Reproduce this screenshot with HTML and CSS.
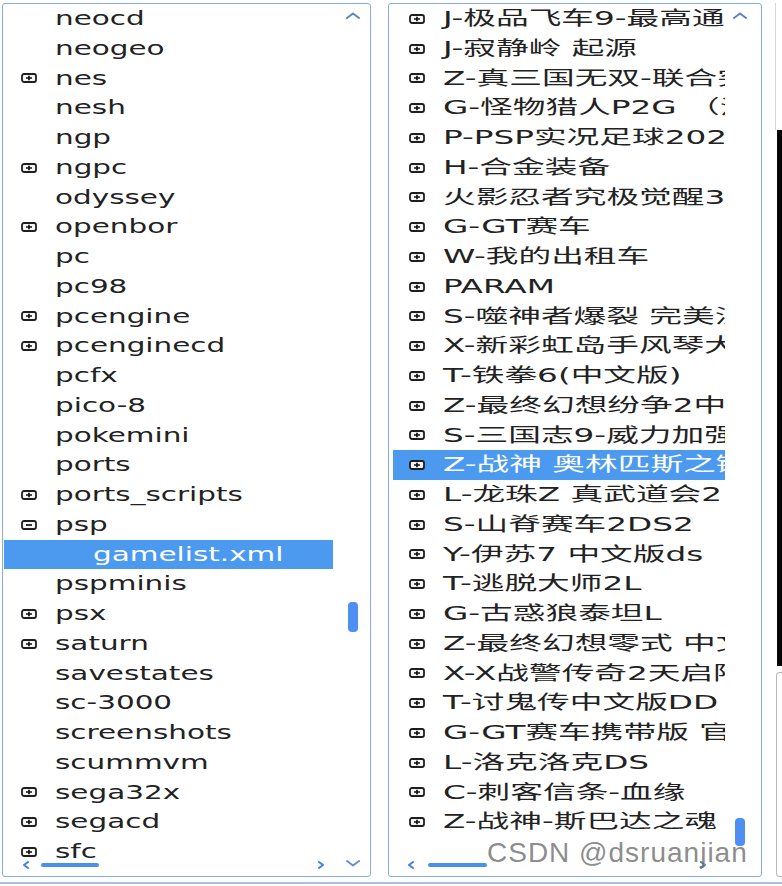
FILE: index.html
```html
<!DOCTYPE html>
<html lang="zh-CN">
<head>
<meta charset="utf-8">
<title>Tree</title>
<link rel="stylesheet" href="styles.css">
</head>
<body>
<div class="screen">
  <div class="panes">
    <section class="pane pane-left">
      <div class="tree tree-left">
        <div class="row"><span class="tog"></span><span class="lbl">neocd</span></div>
        <div class="row"><span class="tog"></span><span class="lbl">neogeo</span></div>
        <div class="row"><svg class="tog" viewBox="0 0 16 10"><rect x="1" y="1" width="14" height="8" rx="2"/><path d="M5 5H11M8 2.8V7.2"/></svg><span class="lbl">nes</span></div>
        <div class="row"><span class="tog"></span><span class="lbl">nesh</span></div>
        <div class="row"><span class="tog"></span><span class="lbl">ngp</span></div>
        <div class="row"><svg class="tog" viewBox="0 0 16 10"><rect x="1" y="1" width="14" height="8" rx="2"/><path d="M5 5H11M8 2.8V7.2"/></svg><span class="lbl">ngpc</span></div>
        <div class="row"><span class="tog"></span><span class="lbl">odyssey</span></div>
        <div class="row"><svg class="tog" viewBox="0 0 16 10"><rect x="1" y="1" width="14" height="8" rx="2"/><path d="M5 5H11M8 2.8V7.2"/></svg><span class="lbl">openbor</span></div>
        <div class="row"><span class="tog"></span><span class="lbl">pc</span></div>
        <div class="row"><span class="tog"></span><span class="lbl">pc98</span></div>
        <div class="row"><svg class="tog" viewBox="0 0 16 10"><rect x="1" y="1" width="14" height="8" rx="2"/><path d="M5 5H11M8 2.8V7.2"/></svg><span class="lbl">pcengine</span></div>
        <div class="row"><svg class="tog" viewBox="0 0 16 10"><rect x="1" y="1" width="14" height="8" rx="2"/><path d="M5 5H11M8 2.8V7.2"/></svg><span class="lbl">pcenginecd</span></div>
        <div class="row"><span class="tog"></span><span class="lbl">pcfx</span></div>
        <div class="row"><span class="tog"></span><span class="lbl">pico-8</span></div>
        <div class="row"><span class="tog"></span><span class="lbl">pokemini</span></div>
        <div class="row"><span class="tog"></span><span class="lbl">ports</span></div>
        <div class="row"><svg class="tog" viewBox="0 0 16 10"><rect x="1" y="1" width="14" height="8" rx="2"/><path d="M5 5H11M8 2.8V7.2"/></svg><span class="lbl">ports_scripts</span></div>
        <div class="row"><svg class="tog" viewBox="0 0 16 10"><rect x="1" y="1" width="14" height="8" rx="2"/><path d="M5 5H11"/></svg><span class="lbl">psp</span></div>
        <div class="row sel nested"><span class="tog"></span><span class="lbl">gamelist.xml</span></div>
        <div class="row"><span class="tog"></span><span class="lbl">pspminis</span></div>
        <div class="row"><svg class="tog" viewBox="0 0 16 10"><rect x="1" y="1" width="14" height="8" rx="2"/><path d="M5 5H11M8 2.8V7.2"/></svg><span class="lbl">psx</span></div>
        <div class="row"><svg class="tog" viewBox="0 0 16 10"><rect x="1" y="1" width="14" height="8" rx="2"/><path d="M5 5H11M8 2.8V7.2"/></svg><span class="lbl">saturn</span></div>
        <div class="row"><span class="tog"></span><span class="lbl">savestates</span></div>
        <div class="row"><span class="tog"></span><span class="lbl">sc-3000</span></div>
        <div class="row"><span class="tog"></span><span class="lbl">screenshots</span></div>
        <div class="row"><span class="tog"></span><span class="lbl">scummvm</span></div>
        <div class="row"><svg class="tog" viewBox="0 0 16 10"><rect x="1" y="1" width="14" height="8" rx="2"/><path d="M5 5H11M8 2.8V7.2"/></svg><span class="lbl">sega32x</span></div>
        <div class="row"><svg class="tog" viewBox="0 0 16 10"><rect x="1" y="1" width="14" height="8" rx="2"/><path d="M5 5H11M8 2.8V7.2"/></svg><span class="lbl">segacd</span></div>
        <div class="row"><svg class="tog" viewBox="0 0 16 10"><rect x="1" y="1" width="14" height="8" rx="2"/><path d="M5 5H11M8 2.8V7.2"/></svg><span class="lbl">sfc</span></div>
      </div>
      <div class="vbar vbar-left">
        <svg class="chev up" viewBox="0 0 16 7"><path d="M2 6L8 1.5L14 6"/></svg>
        <div class="vthumb" style="margin-top:583px"></div>
        <svg class="chev down" viewBox="0 0 16 7"><path d="M2 1L8 5.5L14 1"/></svg>
      </div>
      <div class="hbar hbar-left">
        <svg class="hchev" viewBox="0 0 8 8"><path d="M6 1L2 4L6 7"/></svg>
        <div class="hthumb"></div>
        <svg class="hchev right" viewBox="0 0 8 8"><path d="M2 1L6 4L2 7"/></svg>
      </div>
    </section>

    <section class="pane pane-right">
      <div class="tree tree-right">
        <div class="row"><svg class="tog" viewBox="0 0 16 10"><rect x="1" y="1" width="14" height="8" rx="2"/><path d="M5 5H11M8 2.8V7.2"/></svg><span class="lbl">J-极品飞车9-最高通缉</span></div>
        <div class="row"><svg class="tog" viewBox="0 0 16 10"><rect x="1" y="1" width="14" height="8" rx="2"/><path d="M5 5H11M8 2.8V7.2"/></svg><span class="lbl">J-寂静岭 起源</span></div>
        <div class="row"><svg class="tog" viewBox="0 0 16 10"><rect x="1" y="1" width="14" height="8" rx="2"/><path d="M5 5H11M8 2.8V7.2"/></svg><span class="lbl">Z-真三国无双-联合突袭</span></div>
        <div class="row"><svg class="tog" viewBox="0 0 16 10"><rect x="1" y="1" width="14" height="8" rx="2"/><path d="M5 5H11M8 2.8V7.2"/></svg><span class="lbl">G-怪物猎人P2G （汉化）</span></div>
        <div class="row"><svg class="tog" viewBox="0 0 16 10"><rect x="1" y="1" width="14" height="8" rx="2"/><path d="M5 5H11M8 2.8V7.2"/></svg><span class="lbl">P-PSP实况足球2020</span></div>
        <div class="row"><svg class="tog" viewBox="0 0 16 10"><rect x="1" y="1" width="14" height="8" rx="2"/><path d="M5 5H11M8 2.8V7.2"/></svg><span class="lbl">H-合金装备</span></div>
        <div class="row"><svg class="tog" viewBox="0 0 16 10"><rect x="1" y="1" width="14" height="8" rx="2"/><path d="M5 5H11M8 2.8V7.2"/></svg><span class="lbl">火影忍者究极觉醒3</span></div>
        <div class="row"><svg class="tog" viewBox="0 0 16 10"><rect x="1" y="1" width="14" height="8" rx="2"/><path d="M5 5H11M8 2.8V7.2"/></svg><span class="lbl">G-GT赛车</span></div>
        <div class="row"><svg class="tog" viewBox="0 0 16 10"><rect x="1" y="1" width="14" height="8" rx="2"/><path d="M5 5H11M8 2.8V7.2"/></svg><span class="lbl">W-我的出租车</span></div>
        <div class="row"><svg class="tog" viewBox="0 0 16 10"><rect x="1" y="1" width="14" height="8" rx="2"/><path d="M5 5H11M8 2.8V7.2"/></svg><span class="lbl">PARAM</span></div>
        <div class="row"><svg class="tog" viewBox="0 0 16 10"><rect x="1" y="1" width="14" height="8" rx="2"/><path d="M5 5H11M8 2.8V7.2"/></svg><span class="lbl">S-噬神者爆裂 完美汉化</span></div>
        <div class="row"><svg class="tog" viewBox="0 0 16 10"><rect x="1" y="1" width="14" height="8" rx="2"/><path d="M5 5H11M8 2.8V7.2"/></svg><span class="lbl">X-新彩虹岛手风琴大冒险</span></div>
        <div class="row"><svg class="tog" viewBox="0 0 16 10"><rect x="1" y="1" width="14" height="8" rx="2"/><path d="M5 5H11M8 2.8V7.2"/></svg><span class="lbl">T-铁拳6(中文版)</span></div>
        <div class="row"><svg class="tog" viewBox="0 0 16 10"><rect x="1" y="1" width="14" height="8" rx="2"/><path d="M5 5H11M8 2.8V7.2"/></svg><span class="lbl">Z-最终幻想纷争2中文版</span></div>
        <div class="row"><svg class="tog" viewBox="0 0 16 10"><rect x="1" y="1" width="14" height="8" rx="2"/><path d="M5 5H11M8 2.8V7.2"/></svg><span class="lbl">S-三国志9-威力加强版</span></div>
        <div class="row sel"><svg class="tog" viewBox="0 0 16 10"><rect x="1" y="1" width="14" height="8" rx="2"/><path d="M5 5H11M8 2.8V7.2"/></svg><span class="lbl">Z-战神 奥林匹斯之链</span></div>
        <div class="row"><svg class="tog" viewBox="0 0 16 10"><rect x="1" y="1" width="14" height="8" rx="2"/><path d="M5 5H11M8 2.8V7.2"/></svg><span class="lbl">L-龙珠Z 真武道会2</span></div>
        <div class="row"><svg class="tog" viewBox="0 0 16 10"><rect x="1" y="1" width="14" height="8" rx="2"/><path d="M5 5H11M8 2.8V7.2"/></svg><span class="lbl">S-山脊赛车2DS2</span></div>
        <div class="row"><svg class="tog" viewBox="0 0 16 10"><rect x="1" y="1" width="14" height="8" rx="2"/><path d="M5 5H11M8 2.8V7.2"/></svg><span class="lbl">Y-伊苏7 中文版ds</span></div>
        <div class="row"><svg class="tog" viewBox="0 0 16 10"><rect x="1" y="1" width="14" height="8" rx="2"/><path d="M5 5H11M8 2.8V7.2"/></svg><span class="lbl">T-逃脱大师2L</span></div>
        <div class="row"><svg class="tog" viewBox="0 0 16 10"><rect x="1" y="1" width="14" height="8" rx="2"/><path d="M5 5H11M8 2.8V7.2"/></svg><span class="lbl">G-古惑狼泰坦L</span></div>
        <div class="row"><svg class="tog" viewBox="0 0 16 10"><rect x="1" y="1" width="14" height="8" rx="2"/><path d="M5 5H11M8 2.8V7.2"/></svg><span class="lbl">Z-最终幻想零式 中文版</span></div>
        <div class="row"><svg class="tog" viewBox="0 0 16 10"><rect x="1" y="1" width="14" height="8" rx="2"/><path d="M5 5H11M8 2.8V7.2"/></svg><span class="lbl">X-X战警传奇2天启降临</span></div>
        <div class="row"><svg class="tog" viewBox="0 0 16 10"><rect x="1" y="1" width="14" height="8" rx="2"/><path d="M5 5H11M8 2.8V7.2"/></svg><span class="lbl">T-讨鬼传中文版DD</span></div>
        <div class="row"><svg class="tog" viewBox="0 0 16 10"><rect x="1" y="1" width="14" height="8" rx="2"/><path d="M5 5H11M8 2.8V7.2"/></svg><span class="lbl">G-GT赛车携带版 官方中文</span></div>
        <div class="row"><svg class="tog" viewBox="0 0 16 10"><rect x="1" y="1" width="14" height="8" rx="2"/><path d="M5 5H11M8 2.8V7.2"/></svg><span class="lbl">L-洛克洛克DS</span></div>
        <div class="row"><svg class="tog" viewBox="0 0 16 10"><rect x="1" y="1" width="14" height="8" rx="2"/><path d="M5 5H11M8 2.8V7.2"/></svg><span class="lbl">C-刺客信条-血缘</span></div>
        <div class="row"><svg class="tog" viewBox="0 0 16 10"><rect x="1" y="1" width="14" height="8" rx="2"/><path d="M5 5H11M8 2.8V7.2"/></svg><span class="lbl">Z-战神-斯巴达之魂</span></div>
      </div>
      <div class="vbar vbar-right">
        <svg class="chev up" viewBox="0 0 16 7"><path d="M2 6L8 1.5L14 6"/></svg>
        <div class="vthumb" style="margin-top:799px;height:28px"></div>
      </div>
      <div class="hbar hbar-right">
        <svg class="hchev" viewBox="0 0 8 8"><path d="M6 1L2 4L6 7"/></svg>
        <div class="hthumb"></div>
        <svg class="hchev right" viewBox="0 0 8 8"><path d="M2 1L6 4L2 7"/></svg>
      </div>
    </section>

    <aside class="edge">
      <div class="edge-top"></div>
      <div class="edge-black"></div>
      <div class="edge-pane"></div>
    </aside>
  </div>
  <div class="baseline"></div>
  <div class="watermark">CSDN @dsruanjian</div>
</div>
</body>
</html>
```

FILE: styles.css
```css
html, body {
  margin: 0;
  padding: 0;
  background: #ffffff;
}

.screen {
  position: relative;
  width: 782px;
  height: 886px;
  overflow: hidden;
  background: #ffffff;
  font-family: "DejaVu Sans", "Noto Sans CJK SC", sans-serif;
  color: #222222;
}

.panes {
  display: flex;
  padding: 3px 0 0 2px;
  height: 874px;
}

.pane {
  position: relative;
  box-sizing: border-box;
  height: 874px;
  border: 1px solid #86abe2;
  border-radius: 3px;
  display: flex;
  background: #ffffff;
}

.pane-left {
  width: 369px;
}

.pane-right {
  width: 375px;
  margin-left: 17px;
}

.tree {
  overflow: hidden;
  height: 100%;
}

.tree-left {
  margin-left: 1px;
  width: 329px;
}

.tree-right {
  margin-left: 4px;
  width: 332px;
}

.row {
  display: flex;
  align-items: center;
  height: 29.75px;
  white-space: nowrap;
  font-size: 19px;
  line-height: 29.75px;
}

.tree-left .row {
  padding-left: 17px;
}

.tree-right .row {
  padding-left: 16px;
}

.tree-left .row.nested {
  padding-left: 55px;
}

.tog {
  flex: none;
  width: 16px;
  height: 10px;
  margin-right: 18px;
}

svg.tog rect {
  fill: #f6f6f6;
  stroke: #1e1e1e;
  stroke-width: 1.8;
}

svg.tog path {
  stroke: #111111;
  stroke-width: 1.7;
  fill: none;
}

.lbl {
  display: inline-block;
  transform: scaleX(1.55);
  transform-origin: 0 50%;
}

.tree-right .lbl {
  transform: scaleX(1.72);
}

.row.sel {
  background: #4b9af0;
}

.row.sel .lbl {
  color: #ffffff;
}

.vbar {
  flex: 1;
  display: flex;
  flex-direction: column;
  align-items: center;
}

.vbar-left {
  padding-left: 4px;
}

.vbar-right {
  padding-right: 6px;
}

.chev {
  flex: none;
  width: 16px;
  height: 7px;
  fill: none;
  stroke: #5d83c6;
  stroke-width: 2;
  stroke-linecap: round;
  stroke-linejoin: round;
}

.chev.up {
  margin-top: 8px;
}

.chev.down {
  margin-top: auto;
  margin-bottom: 9px;
  stroke: #6b8fcc;
}

.vthumb {
  flex: none;
  width: 10px;
  height: 30px;
  border-radius: 4px;
  background: #4d8ff2;
}

.hbar {
  position: absolute;
  bottom: 6px;
  height: 10px;
  display: flex;
  align-items: center;
}

.hbar-left {
  left: 19px;
  width: 303px;
}

.hbar-right {
  left: 18px;
  width: 300px;
}

.hchev {
  flex: none;
  width: 8px;
  height: 8px;
  fill: none;
  stroke: #3f82e6;
  stroke-width: 2;
  stroke-linecap: round;
  stroke-linejoin: round;
}

.hchev.right {
  margin-left: auto;
}

.hthumb {
  flex: none;
  width: 58px;
  height: 4px;
  border-radius: 2px;
  background: #4a8ef0;
  margin-left: 11px;
}

.hbar-right .hthumb {
  width: 59px;
  margin-left: 13px;
}

.edge {
  margin-left: 13px;
  width: 7px;
  height: 874px;
  display: flex;
  flex-direction: column;
}

.edge-top {
  height: 127px;
  border-left: 1px solid #d6d6d6;
}

.edge-black {
  height: 536px;
  margin-left: 2px;
  background: #050505;
}

.edge-pane {
  flex: 1;
  margin-top: 6px;
  margin-left: 1px;
  border-left: 1px solid #b8b8b8;
  border-top: 1px solid #b8b8b8;
  border-bottom: 1px solid #b8b8b8;
  border-top-left-radius: 4px;
  border-bottom-left-radius: 4px;
}

.baseline {
  margin-top: 5px;
  height: 2px;
  background: #a9c0e0;
}

.watermark {
  position: absolute;
  left: 487px;
  top: 839px;
  font-family: "Liberation Sans", Arial, sans-serif;
  font-size: 28px;
  line-height: 28px;
  letter-spacing: 1px;
  color: rgba(110, 110, 110, 0.8);
  white-space: nowrap;
}
```
